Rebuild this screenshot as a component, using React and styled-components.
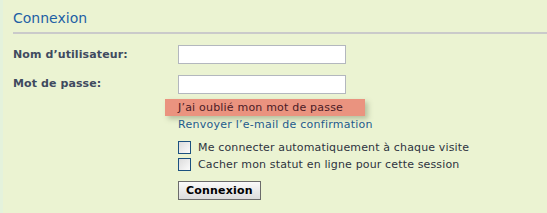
import React from "react";
import styled, { createGlobalStyle } from "styled-components";

const GlobalStyle = createGlobalStyle`
  html, body {
    margin: 0;
    padding: 0;
    background: #ebf3d2;
  }
  body {
    font-family: "DejaVu Sans", Verdana, sans-serif;
  }
`;

const Panel = styled.div`
  width: 547px;
  height: 213px;
  box-sizing: border-box;
  background: #ebf3d2;
  border-left: 3px solid #e4f2dc;
  padding: 8px 0 0 10px;
  overflow: hidden;
`;

const Title = styled.h2`
  margin: 0;
  font-weight: normal;
  font-size: 14px;
  line-height: 20px;
  color: #1d5fa5;
  padding-bottom: 4px;
  border-bottom: 2px solid #cacaca;
`;

const Form = styled.div`
  padding-top: 11px;
`;

const Row = styled.div`
  display: flex;
  align-items: flex-start;
  margin-bottom: ${(p) => p.$gap || 0}px;
`;

const Label = styled.label`
  width: 165px;
  flex-shrink: 0;
  font-size: 11px;
  font-weight: bold;
  letter-spacing: 0.1px;
  color: #3f4a5f;
  padding-top: ${(p) => p.$top || 3}px;
`;

const Field = styled.div`
  display: flex;
  flex-direction: column;
  align-items: flex-start;
`;

const Input = styled.input`
  box-sizing: border-box;
  width: 168px;
  height: 19px;
  margin: 0;
  border: 1px solid #b3b7be;
  background: #fff;
`;

const Highlight = styled.a`
  display: block;
  margin: 5px 0 0 -13px;
  padding: 1px 22px 0 13px;
  background: #ea937f;
  box-shadow: 3px 3px 5px rgba(120, 130, 100, 0.45);
  color: #4b1a26;
  font-size: 11px;
  letter-spacing: 0.2px;
  line-height: 16px;
  text-decoration: none;
`;

const Link = styled.a`
  display: block;
  margin-top: 1px;
  color: #1e5a8c;
  font-size: 11px;
  letter-spacing: 0.25px;
  line-height: 16px;
  text-decoration: none;
`;

const Checks = styled.div`
  margin-top: 8px;
  display: flex;
  flex-direction: column;
  gap: 4px;
`;

const CheckRow = styled.label`
  display: flex;
  align-items: center;
  gap: 7px;
  font-size: 11px;
  letter-spacing: 0.15px;
  line-height: 13px;
  color: #2e3440;
`;

const Box = styled.span`
  box-sizing: border-box;
  width: 13px;
  height: 13px;
  border: 1px solid #1c5180;
  background: linear-gradient(135deg, #dcdcdc, #fbfbfb);
`;

const Button = styled.button`
  margin-top: 10px;
  box-sizing: border-box;
  height: 19px;
  padding: 0 7px;
  font-family: "DejaVu Sans", Verdana, sans-serif;
  font-size: 11px;
  font-weight: bold;
  letter-spacing: 0.2px;
  color: #000;
  border: 1px solid #6b6b6b;
  background: linear-gradient(#fafafa, #dcdcdc);
  line-height: 15px;
`;

export default function App() {
  return (
    <>
      <GlobalStyle />
      <Panel>
        <Title>Connexion</Title>
        <Form>
          <Row $gap={11}>
            <Label $top={3}>Nom d’utilisateur:</Label>
            <Input type="text" />
          </Row>
          <Row>
            <Label $top={2}>Mot de passe:</Label>
            <Field>
              <Input type="password" />
              <Highlight href="#">J’ai oublié mon mot de passe</Highlight>
              <Link href="#">Renvoyer l’e-mail de confirmation</Link>
              <Checks>
                <CheckRow>
                  <Box />
                  Me connecter automatiquement à chaque visite
                </CheckRow>
                <CheckRow>
                  <Box />
                  Cacher mon statut en ligne pour cette session
                </CheckRow>
              </Checks>
              <Button>Connexion</Button>
            </Field>
          </Row>
        </Form>
      </Panel>
    </>
  );
}
